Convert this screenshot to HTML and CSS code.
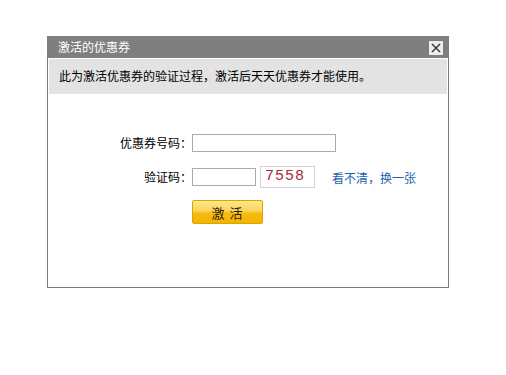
FILE: index.html
```html
<!DOCTYPE html>
<html lang="zh">
<head>
<meta charset="utf-8">
<title>激活的优惠券</title>
<link rel="stylesheet" href="styles.css">
</head>
<body>
<div class="dialog">
  <div class="titlebar">
    <span class="title">激活的优惠券</span>
    <span class="close"><svg width="10" height="10" viewBox="0 0 10 10"><path d="M1 1L9 9M9 1L1 9" stroke="#333" stroke-width="1.4" fill="none"/></svg></span>
  </div>
  <div class="content">
    <div class="notice">此为激活优惠券的验证过程，激活后天天优惠券才能使用。</div>
    <div class="form">
      <label class="label">优惠券号码：</label>
      <div class="field"><input class="input long" type="text"></div>
      <label class="label">验证码：</label>
      <div class="field">
        <input class="input short" type="text">
        <span class="captcha">7558</span>
        <a class="refresh" href="#">看不清，换一张</a>
      </div>
      <span></span>
      <div class="field"><button class="btn" type="button">激 活</button></div>
    </div>
  </div>
</div>
</body>
</html>
```
FILE: styles.css
```css
* { box-sizing: border-box; }
body {
  margin: 0;
  padding: 36px 0 0 47px;
  font-family: "Noto Sans CJK SC", "DejaVu Sans", sans-serif;
  font-size: 12px;
  color: #000;
  background: #fff;
}
.dialog {
  width: 402px;
  height: 252px;
  border: 1px solid #7b7b7b;
  background: #fff;
}
.titlebar {
  height: 22px;
  margin: -1px -1px 0 -1px;
  background: #7f7f7f;
  display: flex;
  align-items: center;
  justify-content: space-between;
  padding: 0 6px 0 11px;
}
.title {
  color: #fff;
  font-size: 12px;
  line-height: 22px;
}
.close {
  width: 14px;
  height: 14px;
  background: #ececec;
  display: flex;
  align-items: center;
  justify-content: center;
  margin-top: 2px;
}
.content {
  padding: 1px 1px 0 1px;
}
.notice {
  height: 35px;
  background: #e3e3e3;
  padding: 9px 0 0 10px;
  line-height: 16px;
}
.form {
  display: grid;
  grid-template-columns: 143px auto;
  row-gap: 12px;
  margin-top: 38px;
  align-items: center;
}
.label {
  text-align: right;
  line-height: 22px;
}
.field {
  display: flex;
  align-items: center;
  height: 22px;
}
.input {
  height: 18px;
  border: 1px solid #ababab;
  padding: 0 2px;
  margin: 0;
  font-size: 12px;
  outline: none;
}
.long { width: 144px; }
.short { width: 64px; }
.captcha {
  width: 55px;
  height: 22px;
  margin-left: 4px;
  border: 1px solid #d3d3d3;
  color: #a8283a;
  font-family: "Liberation Mono", monospace;
  font-size: 15px;
  letter-spacing: 1px;
  line-height: 20px;
  padding-left: 4px;
}
.refresh {
  margin-left: 17px;
  color: #1c63b0;
  text-decoration: none;
}
.btn {
  width: 71px;
  height: 24px;
  margin: 0;
  margin-top: 2px;
  border: 1px solid #e1a100;
  border-radius: 2px;
  background: linear-gradient(#fde78d 0%, #fbd45a 45%, #f6bc14 55%, #f3b400 100%);
  color: #2d1c00;
  font-family: "Noto Sans CJK SC", sans-serif;
  font-size: 13px;
  padding: 0;
  letter-spacing: 1px;
}
```
